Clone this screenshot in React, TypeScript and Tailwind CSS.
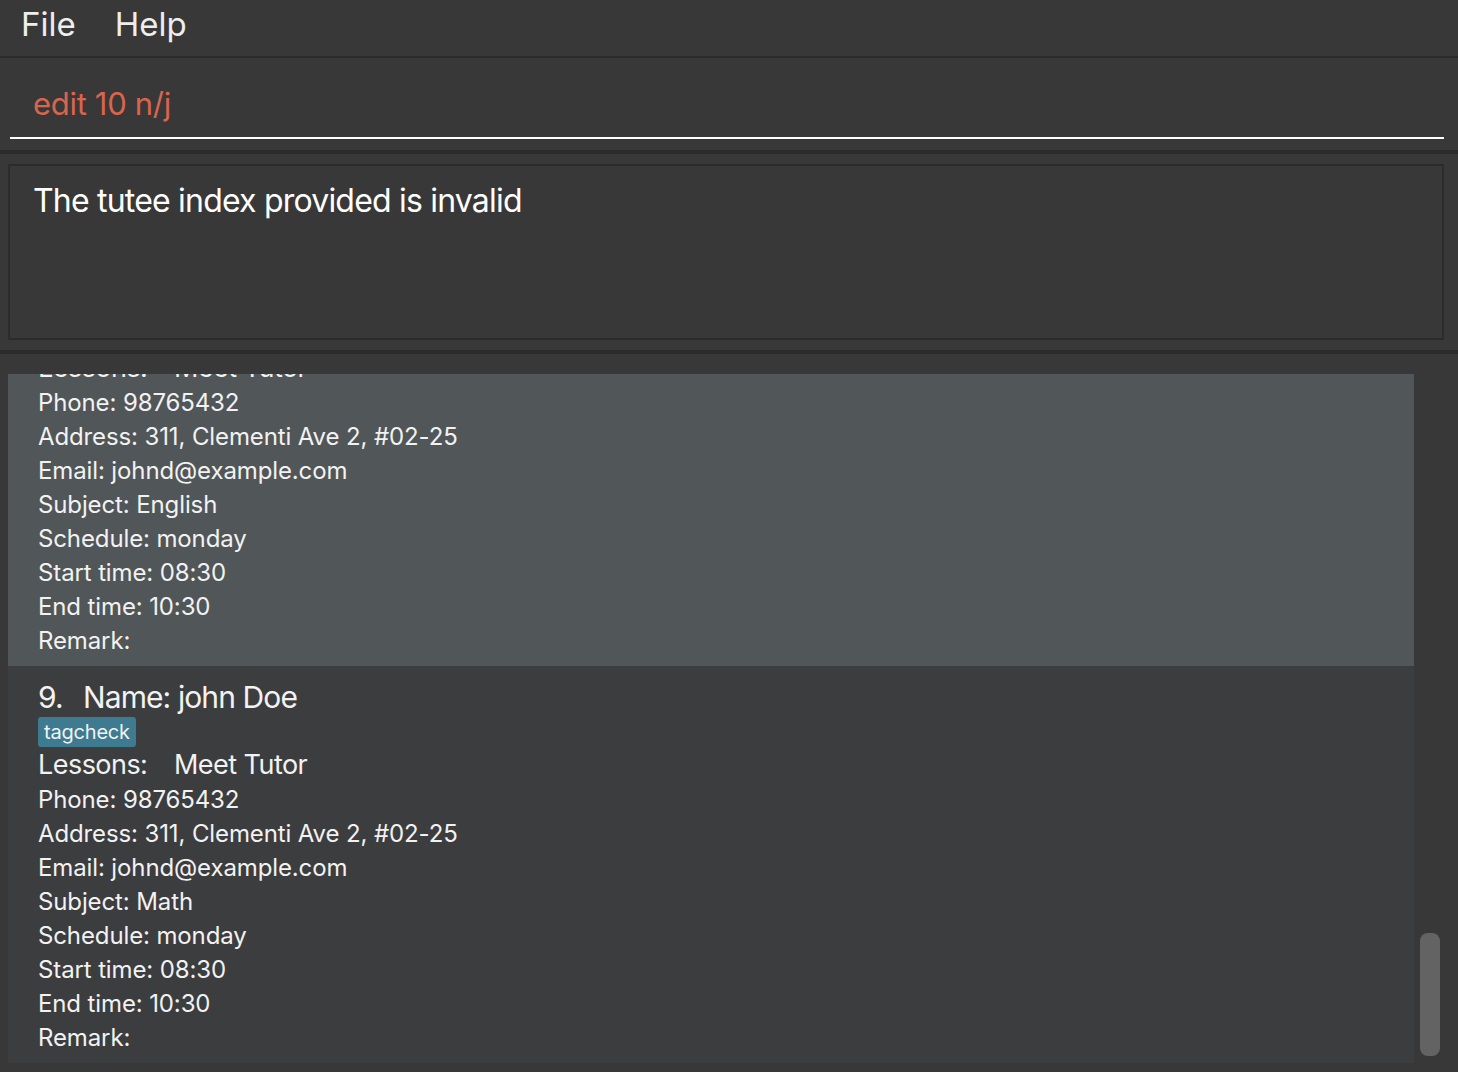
const font = { fontFamily: 'Inter, Roboto, "Liberation Sans", sans-serif' }

type Tutee = {
  index: number
  name: string
  tags: string[]
  lesson: string
  phone: string
  address: string
  email: string
  subject: string
  schedule: string
  start: string
  end: string
  remark: string
}

const tutees: Tutee[] = [
  {
    index: 8,
    name: 'john Doe',
    tags: ['tagcheck'],
    lesson: 'Meet Tutor',
    phone: '98765432',
    address: '311, Clementi Ave 2, #02-25',
    email: 'johnd@example.com',
    subject: 'English',
    schedule: 'monday',
    start: '08:30',
    end: '10:30',
    remark: '',
  },
  {
    index: 9,
    name: 'john Doe',
    tags: ['tagcheck'],
    lesson: 'Meet Tutor',
    phone: '98765432',
    address: '311, Clementi Ave 2, #02-25',
    email: 'johnd@example.com',
    subject: 'Math',
    schedule: 'monday',
    start: '08:30',
    end: '10:30',
    remark: '',
  },
]

function TuteeCard({ t, selected }: { t: Tutee; selected: boolean }) {
  const rows = [
    `Phone: ${t.phone}`,
    `Address: ${t.address}`,
    `Email: ${t.email}`,
    `Subject: ${t.subject}`,
    `Schedule: ${t.schedule}`,
    `Start time: ${t.start}`,
    `End time: ${t.end}`,
    `Remark: ${t.remark}`,
  ]
  return (
    <div className={`h-[397px] pl-[30px] pt-[12px] text-[#f2f2f2] ${selected ? 'bg-[#515658]' : 'bg-[#3c3d3f]'}`}>
      <div className="flex h-[38px] items-center text-[30px] tracking-[-0.03em]">
        <span className="w-[45px]">{t.index}.</span>
        <span>Name: {t.name}</span>
      </div>
      <div className="flex h-[32px] items-center gap-2">
        {t.tags.map((tag) => (
          <span key={tag} className="rounded-[3px] bg-[#3e7b91] px-[6px] text-[20px] leading-[30px] tracking-[-0.01em] text-[#f2f2f2]">
            {tag}
          </span>
        ))}
      </div>
      <div className="flex h-[35px] items-center text-[27px] tracking-[-0.02em]">
        <span className="w-[136px]">Lessons:</span>
        <span>{t.lesson}</span>
      </div>
      {rows.map((r) => (
        <div key={r} className="flex h-[34px] items-center text-[24px] tracking-[-0.005em]">
          {r}
        </div>
      ))}
    </div>
  )
}

export default function App() {
  return (
    <div style={font} className="flex h-[1072px] w-[1458px] flex-col overflow-hidden bg-[#383838]">
      {/* menu */}
      <div className="flex h-[58px] shrink-0 items-center gap-[39px] border-b-2 border-[#2b2b2b] bg-[#383838] pb-[6px] pl-[21px] text-[33px] text-[#eeeeee]">
        <span>File</span>
        <span>Help</span>
      </div>

      {/* command box */}
      <div className="h-[96px] shrink-0 border-b-4 border-[#2b2b2b] pl-[10px] pr-[14px]">
        <div className="flex h-[81px] items-center border-b-2 border-white pl-[23px] pt-[14px] text-[31px] tracking-[-0.01em] text-[#d8654e]">
          edit 10 n/j
        </div>
      </div>

      {/* result */}
      <div className="h-[200px] shrink-0 border-b-4 border-[#2b2b2b] pl-[8px] pr-[14px] pt-[10px]">
        <div className="h-[176px] border-2 border-[#2b2b2b] bg-[#383838] pl-[23px] pt-[11px] text-[32px] tracking-[-0.025em] text-white">
          The tutee index provided is invalid
        </div>
      </div>

      {/* list */}
      <div className="flex flex-1 pl-[8px] pt-[20px]">
        <div className="h-[689px] w-[1406px] overflow-hidden">
          <div className="mt-[-105px]">
            {tutees.map((t, i) => (
              <TuteeCard key={t.index} t={t} selected={i === 0} />
            ))}
          </div>
        </div>
        <div className="w-[44px] pl-[6px]">
          <div className="mt-[559px] h-[123px] w-[20px] rounded-[8px] bg-[#636363]" />
        </div>
      </div>
    </div>
  )
}
